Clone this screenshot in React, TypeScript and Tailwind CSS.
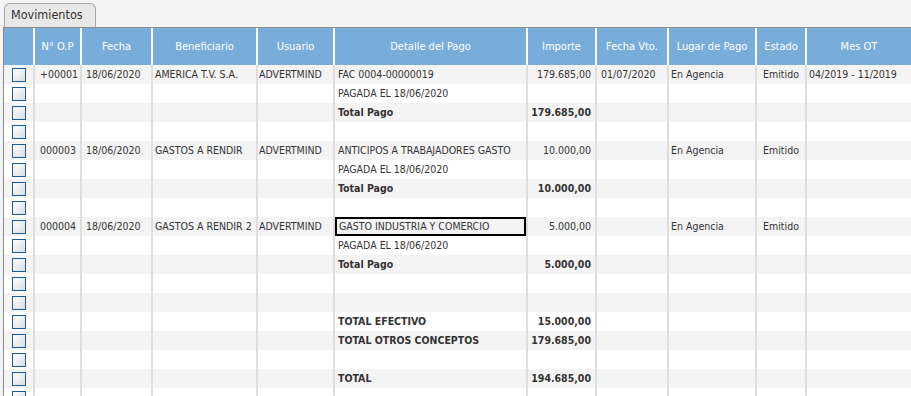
import React from 'react';

type Row = {
  op?: string;
  fecha?: string;
  benef?: string;
  usuario?: string;
  detalle?: string;
  importe?: string;
  vto?: string;
  lugar?: string;
  estado?: string;
  mes?: string;
  bold?: boolean;
  focus?: boolean;
};

const rows: Row[] = [
  { op: '+00001', fecha: '18/06/2020', benef: 'AMERICA T.V. S.A.', usuario: 'ADVERTMIND', detalle: 'FAC 0004-00000019', importe: '179.685,00', vto: '01/07/2020', lugar: 'En Agencia', estado: 'Emitido', mes: '04/2019 - 11/2019' },
  { detalle: 'PAGADA EL 18/06/2020' },
  { detalle: 'Total Pago', importe: '179.685,00', bold: true },
  {},
  { op: '000003', fecha: '18/06/2020', benef: 'GASTOS A RENDIR', usuario: 'ADVERTMIND', detalle: 'ANTICIPOS A TRABAJADORES GASTO', importe: '10.000,00', lugar: 'En Agencia', estado: 'Emitido' },
  { detalle: 'PAGADA EL 18/06/2020' },
  { detalle: 'Total Pago', importe: '10.000,00', bold: true },
  {},
  { op: '000004', fecha: '18/06/2020', benef: 'GASTOS A RENDIR 2', usuario: 'ADVERTMIND', detalle: 'GASTO INDUSTRIA Y COMERCIO', importe: '5.000,00', lugar: 'En Agencia', estado: 'Emitido', focus: true },
  { detalle: 'PAGADA EL 18/06/2020' },
  { detalle: 'Total Pago', importe: '5.000,00', bold: true },
  {},
  {},
  { detalle: 'TOTAL EFECTIVO', importe: '15.000,00', bold: true },
  { detalle: 'TOTAL OTROS CONCEPTOS', importe: '179.685,00', bold: true },
  {},
  { detalle: 'TOTAL', importe: '194.685,00', bold: true },
  {},
];

const headers = ['', 'N° O.P', 'Fecha', 'Beneficiario', 'Usuario', 'Detalle del Pago', 'Importe', 'Fecha Vto.', 'Lugar de Pago', 'Estado', 'Mes OT'];
const widths = [30, 47, 71, 105, 77, 193, 69, 72, 88, 50, 105];

function CheckBox() {
  return (
    <span className="block w-[14px] h-[14px] ml-[8px] border border-[#1d5a97] bg-gradient-to-br from-white to-[#dcdcdc]" />
  );
}

export default function App() {
  return (
    <div className="w-[911px] h-[396px] overflow-hidden bg-[#f4f4f4] text-[10.5px] text-[#333] leading-none" style={{ fontFamily: '"DejaVu Sans Condensed", "DejaVu Sans", sans-serif' }}>
      <div className="pt-[3px] pl-[4px] h-[27px]">
        <div className="w-[92px] h-[24px] rounded-t-[6px] border border-b-0 border-[#a5a5a5] bg-[#e8e8e8] text-[12.5px] text-[#333] pl-[6px] pt-[5px]">
          Movimientos
        </div>
      </div>
      <div className="ml-[3px] border-t border-l border-[#8c8c8c]">
        <table className="table-fixed border-collapse w-[907px]">
          <colgroup>
            {widths.map((w, i) => (
              <col key={i} style={{ width: w }} />
            ))}
          </colgroup>
          <thead>
            <tr className="h-[37px] bg-[#78add9]">
              {headers.map((h, i) => (
                <th key={i} className={`font-normal text-[11px] text-white text-center align-middle border-white ${i > 0 ? 'border-l-2' : ''}`}>
                  {h}
                </th>
              ))}
            </tr>
          </thead>
          <tbody>
            {rows.map((r, i) => {
              const b = r.bold ? 'font-bold' : '';
              return (
                <tr key={i} className={`h-[19px] ${i % 2 === 0 ? 'bg-[#f4f4f4]' : 'bg-white'}`}>
                  <td className="align-middle"><CheckBox /></td>
                  <td className="border-l-2 border-[#dedede] pl-[5px] whitespace-nowrap">{r.op}</td>
                  <td className="border-l-2 border-[#dedede] pl-[4px] whitespace-nowrap">{r.fecha}</td>
                  <td className="border-l-2 border-[#dedede] pl-[2px] whitespace-nowrap">{r.benef}</td>
                  <td className="border-l-2 border-[#dedede] pl-[1px] whitespace-nowrap">{r.usuario}</td>
                  <td className={`p-0 border-l-2 border-[#dedede] whitespace-nowrap ${b}`}>
                    {r.focus ? (
                      <div className="h-[19px] border-2 border-black pl-[2px] flex items-center">{r.detalle}</div>
                    ) : (
                      <div className="pl-[3px]">{r.detalle}</div>
                    )}
                  </td>
                  <td className={`border-l-2 border-[#dedede] text-right pr-[4px] whitespace-nowrap ${b}`}>{r.importe}</td>
                  <td className="border-l-2 border-[#dedede] pl-[4px] whitespace-nowrap">{r.vto}</td>
                  <td className="border-l-2 border-[#dedede] pl-[2px] whitespace-nowrap">{r.lugar}</td>
                  <td className="border-l-2 border-[#dedede] text-center whitespace-nowrap">{r.estado}</td>
                  <td className="border-l-2 border-[#dedede] pl-[2px] whitespace-nowrap">{r.mes}</td>
                </tr>
              );
            })}
          </tbody>
        </table>
      </div>
    </div>
  );
}
